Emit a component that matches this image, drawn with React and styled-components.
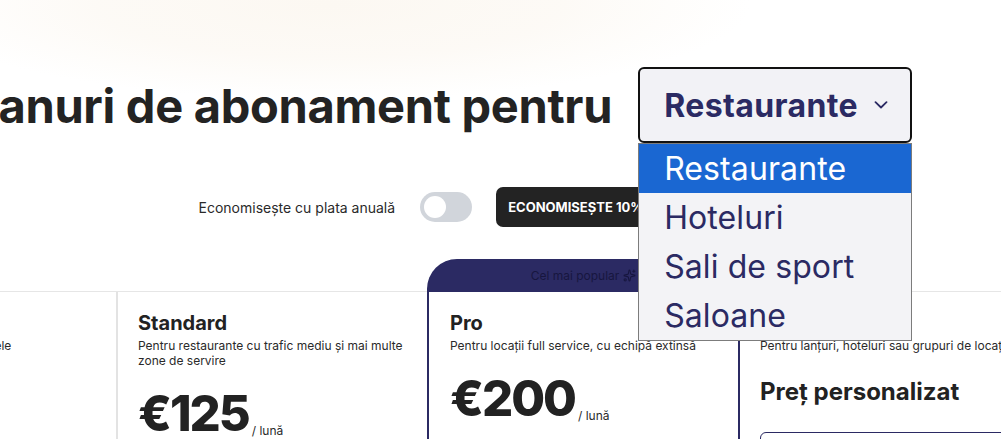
import React from "react";
import styled, { createGlobalStyle } from "styled-components";
import { Sparkles } from "lucide-react";

const NAVY = "#2b2a63";

const plans = [
  {
    name: "Basic",
    desc: "Pentru localuri mici sau cafenele",
    price: "€75",
  },
  {
    name: "Standard",
    desc: "Pentru restaurante cu trafic mediu și mai multe zone de servire",
    price: "€125",
  },
  {
    name: "Pro",
    desc: "Pentru locații full service, cu echipă extinsă",
    price: "€200",
    featured: true,
  },
  {
    name: "Enterprise",
    desc: "Pentru lanțuri, hoteluri sau grupuri de locații",
    custom: true,
  },
];

const options = ["Restaurante", "Hoteluri", "Sali de sport", "Saloane"];

const App = () => {
  return (
    <Page>
      <GlobalStyle />
      <Stage>
        <HeaderRow>
          <Heading>Planuri de abonament pentru</Heading>
          <SelectWrap>
            <SelectBox>
              Restaurante
              <svg width="14" height="8" viewBox="0 0 14 8" fill="none">
                <path
                  d="M1.5 1.2 L7 6.5 L12.5 1.2"
                  stroke={NAVY}
                  strokeWidth="1.8"
                  strokeLinecap="round"
                  strokeLinejoin="round"
                />
              </svg>
            </SelectBox>
            <OptionList>
              {options.map((o, i) => (
                <OptionItem key={o} $active={i === 0}>
                  {o}
                </OptionItem>
              ))}
            </OptionList>
          </SelectWrap>
        </HeaderRow>

        <ToggleRow>
          <ToggleLabel>Economisește cu plata anuală</ToggleLabel>
          <Switch>
            <Knob />
          </Switch>
          <Badge>ECONOMISEȘTE 10%</Badge>
        </ToggleRow>

        <Cards>
          {plans.map((p) =>
            p.featured ? (
              <Featured key={p.name}>
                <Banner>
                  Cel mai popular
                  <Sparkles size={13} strokeWidth={2} />
                </Banner>
                <FeaturedBody>
                  <PlanContent plan={p} />
                </FeaturedBody>
              </Featured>
            ) : (
              <Card key={p.name}>
                <PlanContent plan={p} />
              </Card>
            )
          )}
        </Cards>
      </Stage>
    </Page>
  );
};

const PlanContent = ({ plan }) => (
  <>
    <PlanName>{plan.name}</PlanName>
    <PlanDesc>{plan.desc}</PlanDesc>
    {plan.custom ? (
      <>
        <CustomPrice>Preț personalizat</CustomPrice>
        <ContactBox />
      </>
    ) : (
      <PriceRow>
        <Price>{plan.price}</Price>
        <Per>/ lună</Per>
      </PriceRow>
    )}
  </>
);

const GlobalStyle = createGlobalStyle`
  html, body {
    margin: 0;
    padding: 0;
    background: #ffffff;
    overflow: hidden;
  }
  body {
    font-family: Inter, "Noto Sans", sans-serif;
    color: #222222;
  }
`;

const Page = styled.div`
  height: 439px;
  overflow: hidden;
  background: radial-gradient(
    ellipse 420px 95px at 330px 5px,
    #fcf8f2 0%,
    rgba(252, 248, 242, 0.7) 55%,
    rgba(255, 255, 255, 0) 100%
  );
`;

const Stage = styled.div`
  width: 1244px;
  margin-left: -195px;
  display: flex;
  flex-direction: column;
  align-items: center;
`;

const HeaderRow = styled.div`
  display: flex;
  align-items: center;
  gap: 26px;
  padding-top: 67px;
  margin-left: 14px;
`;

const Heading = styled.h1`
  margin: 0;
  font-size: 47px;
  font-weight: 700;
  letter-spacing: -0.3px;
  color: #232323;
  white-space: nowrap;
`;

const SelectWrap = styled.div`
  position: relative;
`;

const SelectBox = styled.div`
  width: 274px;
  height: 76px;
  box-sizing: border-box;
  border: 2px solid #111111;
  border-radius: 6px;
  background: #f2f2f6;
  display: flex;
  align-items: center;
  justify-content: space-between;
  padding: 0 22px 0 24px;
  font-size: 32px;
  font-weight: 700;
  letter-spacing: 0.4px;
  color: ${NAVY};
`;

const OptionList = styled.div`
  position: absolute;
  top: 100%;
  left: 0;
  width: 274px;
  box-sizing: border-box;
  border: 1px solid #7c7c7c;
  background: #f3f3f6;
  z-index: 10;
`;

const OptionItem = styled.div`
  height: 49px;
  display: flex;
  align-items: center;
  padding-left: 25px;
  font-size: 32px;
  letter-spacing: 0.1px;
  color: ${(p) => (p.$active ? "#ffffff" : NAVY)};
  background: ${(p) => (p.$active ? "#1a67d2" : "transparent")};
`;

const ToggleRow = styled.div`
  display: flex;
  align-items: center;
  margin-top: 44px;
`;

const ToggleLabel = styled.span`
  font-size: 14px;
  color: #2a2a2a;
`;

const Switch = styled.div`
  width: 52px;
  height: 30px;
  border-radius: 15px;
  background: #d1d5db;
  margin: 0 24px 0 25px;
  display: flex;
  align-items: center;
  padding-left: 4px;
  box-sizing: border-box;
`;

const Knob = styled.div`
  width: 22px;
  height: 22px;
  border-radius: 50%;
  background: #ffffff;
`;

const Badge = styled.div`
  height: 40px;
  display: flex;
  align-items: center;
  padding: 0 12px;
  border-radius: 7px;
  background: #232323;
  color: #ffffff;
  font-size: 13px;
  font-weight: 700;
`;

const Cards = styled.div`
  align-self: stretch;
  margin-top: 64px;
  display: grid;
  grid-template-columns: repeat(4, 311px);
  align-items: start;
  border-top: 1px solid #e6e6e6;
`;

const Card = styled.div`
  border-left: 2px solid #e3e3e3;
  padding: 18px 14px 0 20px;
  height: 160px;
`;

const Featured = styled.div`
  margin-top: -33px;
  margin-right: -2px;
  position: relative;
  z-index: 1;
  background: #ffffff;
`;

const Banner = styled.div`
  height: 33px;
  background: ${NAVY};
  border-radius: 30px 30px 0 0;
  display: flex;
  align-items: center;
  justify-content: center;
  gap: 4px;
  font-size: 12px;
  color: #17163f;
`;

const FeaturedBody = styled.div`
  border: 2px solid ${NAVY};
  border-top: none;
  padding: 18px 14px 0 21px;
  height: 160px;
`;

const PlanName = styled.h3`
  margin: 0;
  font-size: 20px;
  line-height: 26px;
  font-weight: 700;
  color: #222222;
`;

const PlanDesc = styled.p`
  margin: 2px 0 0;
  font-size: 12px;
  line-height: 15px;
  color: #2a2a2a;
`;

const PriceRow = styled.div`
  display: flex;
  align-items: flex-end;
  gap: 3px;
  margin-top: 21px;
`;

const Price = styled.span`
  font-size: 49px;
  line-height: 1;
  font-weight: 800;
  letter-spacing: -2px;
  color: #222222;
`;

const Per = styled.span`
  font-size: 12px;
  color: #2a2a2a;
`;

const CustomPrice = styled.div`
  margin-top: 24px;
  font-size: 24px;
  line-height: 30px;
  font-weight: 700;
  color: #222222;
`;

const ContactBox = styled.div`
  margin-top: 25px;
  height: 44px;
  border: 1.5px solid ${NAVY};
  border-radius: 6px;
`;

export default App;
